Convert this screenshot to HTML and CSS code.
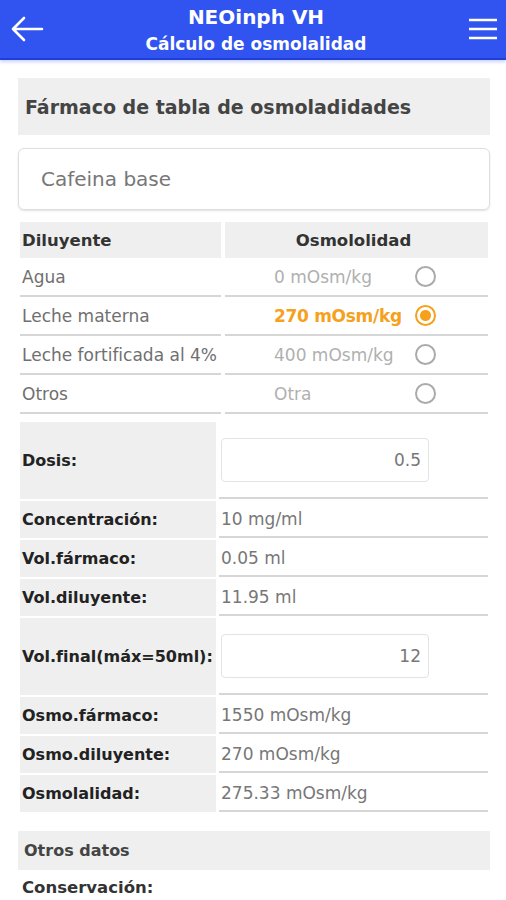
FILE: index.html
```html
<!DOCTYPE html>
<html lang="es">
<head>
    <meta charset="UTF-8">
    <meta name="viewport" content="width=device-width, initial-scale=1.0">
    <title>NEOinph VH</title>
    <link rel="stylesheet" href="styles.css">
</head>
<body>
    <header class="topbar">
        <span class="back">
            <svg width="34" height="26" viewBox="0 0 34 26"><path d="M32 13H3M14 2L3 13l11 11" fill="none" stroke="#fff" stroke-width="2.6" stroke-linecap="round" stroke-linejoin="round"/></svg>
        </span>
        <div class="titles">
            <div class="title">NEOinph VH</div>
            <div class="subtitle">Cálculo de osmolalidad</div>
        </div>
        <span class="menu">
            <svg width="30" height="24" viewBox="0 0 30 24"><path d="M1 3h28M1 12h28M1 21h28" stroke="#fff" stroke-width="2.6"/></svg>
        </span>
    </header>

    <main class="content">
        <div class="section-title">Fármaco de tabla de osmoladidades</div>
        <div class="drug-box">Cafeina base</div>

        <div class="dil-table">
            <div class="dil-head">
                <div class="cell-l">Diluyente</div>
                <div class="cell-r">Osmololidad</div>
            </div>
            <div class="dil-row">
                <div class="cell-l">Agua</div>
                <div class="cell-r"><span class="val">0 mOsm/kg</span><span class="radio"></span></div>
            </div>
            <div class="dil-row active">
                <div class="cell-l">Leche materna</div>
                <div class="cell-r"><span class="val">270 mOsm/kg</span><span class="radio on"></span></div>
            </div>
            <div class="dil-row">
                <div class="cell-l">Leche fortificada al 4%</div>
                <div class="cell-r"><span class="val">400 mOsm/kg</span><span class="radio"></span></div>
            </div>
            <div class="dil-row">
                <div class="cell-l">Otros</div>
                <div class="cell-r"><span class="val">Otra</span><span class="radio"></span></div>
            </div>
        </div>

        <div class="calc">
            <div class="calc-row tall">
                <div class="lbl">Dosis:</div>
                <div class="out"><div class="num-input">0.5</div></div>
            </div>
            <div class="calc-row">
                <div class="lbl">Concentración:</div>
                <div class="out">10 mg/ml</div>
            </div>
            <div class="calc-row">
                <div class="lbl">Vol.fármaco:</div>
                <div class="out">0.05 ml</div>
            </div>
            <div class="calc-row">
                <div class="lbl">Vol.diluyente:</div>
                <div class="out">11.95 ml</div>
            </div>
            <div class="calc-row tall">
                <div class="lbl">Vol.final(máx=50ml):</div>
                <div class="out"><div class="num-input">12</div></div>
            </div>
            <div class="calc-row">
                <div class="lbl">Osmo.fármaco:</div>
                <div class="out">1550 mOsm/kg</div>
            </div>
            <div class="calc-row">
                <div class="lbl">Osmo.diluyente:</div>
                <div class="out">270 mOsm/kg</div>
            </div>
            <div class="calc-row">
                <div class="lbl">Osmolalidad:</div>
                <div class="out">275.33 mOsm/kg</div>
            </div>
        </div>

        <div class="section-title small">Otros datos</div>
        <div class="extra">Conservación:</div>
    </main>
</body>
</html>
```

FILE: styles.css
```css
body {
    margin: 0;
    background: #fff;
    font-family: "DejaVu Sans", "Noto Sans", sans-serif;
    color: #333;
}

/* cabecera */
.topbar {
    height: 58px;
    background-color: #3153ef;
    border-bottom: 2px solid #1f3fd8;
    box-shadow: 0 2px 3px rgba(49, 83, 239, 0.25);
    display: flex;
    align-items: center;
    justify-content: space-between;
    padding: 0 8px 0 10px;
    color: #fff;
}
.back, .menu {
    display: flex;
    align-items: center;
}
.titles {
    align-self: flex-start;
    padding-top: 7px;
    text-align: center;
    font-weight: bold;
    line-height: 1;
}
.title {
    font-size: 20px;
    margin-bottom: 9px;
}
.subtitle {
    font-size: 17px;
}

.content {
    padding: 18px 16px 0 18px;
}

.section-title {
    background-color: #efefef;
    height: 57px;
    display: flex;
    align-items: center;
    padding-left: 7px;
    font-size: 19px;
    font-weight: bold;
    color: #444;
}
.section-title.small {
    height: 39px;
    font-size: 16px;
    padding-left: 6px;
    margin-top: 19px;
}

.drug-box {
    margin-top: 13px;
    height: 60px;
    border: 1px solid #dedede;
    border-radius: 6px;
    box-shadow: 0 1px 2px rgba(0, 0, 0, 0.12);
    display: flex;
    align-items: center;
    padding-left: 22px;
    font-size: 20px;
    color: #777;
}

/* tabla de diluyentes */
.dil-table {
    margin: 12px 2px 0 2px;
}
.dil-head, .dil-row {
    display: flex;
    gap: 4px;
}
.dil-head {
    height: 36px;
    font-size: 16.5px;
    font-weight: bold;
    color: #333;
}
.dil-head .cell-l, .dil-head .cell-r {
    background-color: #efefef;
    display: flex;
    align-items: center;
}
.dil-head .cell-r {
    justify-content: center;
    padding-right: 6px;
}
.cell-l {
    width: 199px;
    padding-left: 2px;
    white-space: nowrap;
}
.cell-r {
    flex: 1;
}
.dil-row {
    height: 39px;
    font-size: 17px;
    color: #707070;
}
.dil-row .cell-l, .dil-row .cell-r {
    border-bottom: 2px solid #d6d6d6;
    display: flex;
    align-items: center;
}
.dil-row .cell-r {
    justify-content: flex-end;
    padding-right: 52px;
}
.val {
    width: 133px;
    color: #b0b0b0;
    white-space: nowrap;
}
.dil-row.active .val {
    color: #f5a11c;
    font-weight: bold;
    letter-spacing: -0.3px;
}
.radio {
    width: 17px;
    height: 17px;
    border: 2px solid #aaa;
    border-radius: 50%;
    margin-left: 8px;
    display: inline-block;
    flex-shrink: 0;
}
.radio.on {
    border-color: #f5a11c;
    background: radial-gradient(circle, #f5a11c 0 5px, transparent 6px);
}

/* calculos */
.calc {
    margin: 8px 2px 0 2px;
    display: flex;
    flex-direction: column;
    gap: 2px;
}
.calc-row {
    display: flex;
    height: 37px;
    gap: 3px;
}
.calc-row.tall {
    height: 77px;
}
.lbl {
    width: 194px;
    background-color: #efefef;
    padding-left: 2px;
    display: flex;
    align-items: center;
    font-size: 16px;
    font-weight: bold;
    color: #222;
    white-space: nowrap;
}
.out {
    flex: 1;
    border-bottom: 2px solid #d6d6d6;
    display: flex;
    align-items: center;
    padding-left: 2px;
    font-size: 17px;
    color: #777;
}
.num-input {
    width: 199px;
    height: 42px;
    border: 1px solid #e3e3e3;
    border-radius: 4px;
    display: flex;
    align-items: center;
    justify-content: flex-end;
    padding-right: 7px;
    color: #777;
}

.extra {
    padding: 8px 0 0 4px;
    font-size: 16.5px;
    font-weight: bold;
    color: #333;
}
```
